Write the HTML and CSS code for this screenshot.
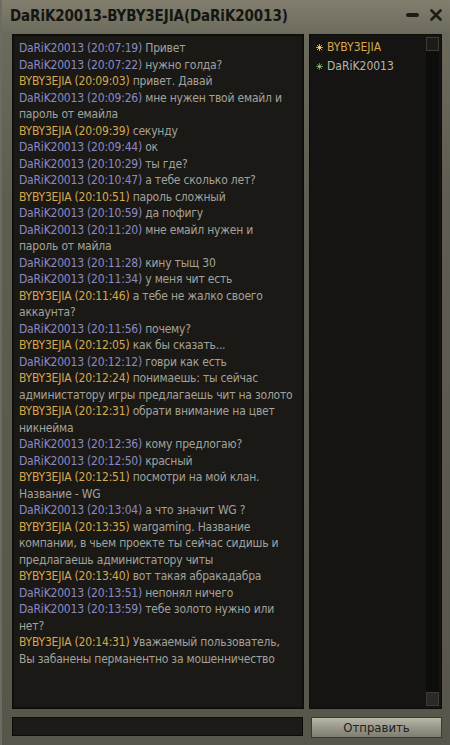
FILE: index.html
```html
<!DOCTYPE html>
<html lang="ru">
<head>
    <meta charset="UTF-8">
    <meta name="viewport" content="width=device-width, initial-scale=1.0">
    <title>DaRiK20013-BYBY3EJIA</title>
    <link rel="stylesheet" href="styles.css">
</head>
<body>
    <div class="window">
        <div class="titlebar">
            <div class="title">DaRiK20013-BYBY3EJIA(DaRiK20013)</div>
            <div class="controls">
                <span class="btn-min"></span>
                <svg class="btn-close" width="12" height="12" viewBox="0 0 12 12">
                    <path d="M1.5 1.5 L10.5 10.5 M10.5 1.5 L1.5 10.5" stroke="#1c1c18" stroke-width="2.6" stroke-linecap="round"/>
                </svg>
            </div>
        </div>

        <div class="main">
            <div class="chat">
                <div class="msg"><span class="me">DaRiK20013 (20:07:19)</span> Привет</div>
                <div class="msg"><span class="me">DaRiK20013 (20:07:22)</span> нужно голда?</div>
                <div class="msg"><span class="other">BYBY3EJIA (20:09:03)</span> привет. Давай</div>
                <div class="msg"><span class="me">DaRiK20013 (20:09:26)</span> мне нужен твой емайл и пароль от емайла</div>
                <div class="msg"><span class="other">BYBY3EJIA (20:09:39)</span> секунду</div>
                <div class="msg"><span class="me">DaRiK20013 (20:09:44)</span> ок</div>
                <div class="msg"><span class="me">DaRiK20013 (20:10:29)</span> ты где?</div>
                <div class="msg"><span class="me">DaRiK20013 (20:10:47)</span> а тебе сколько лет?</div>
                <div class="msg"><span class="other">BYBY3EJIA (20:10:51)</span> пароль сложный</div>
                <div class="msg"><span class="me">DaRiK20013 (20:10:59)</span> да пофигу</div>
                <div class="msg"><span class="me">DaRiK20013 (20:11:20)</span> мне емайл нужен и пароль от майла</div>
                <div class="msg"><span class="me">DaRiK20013 (20:11:28)</span> кину тыщ 30</div>
                <div class="msg"><span class="me">DaRiK20013 (20:11:34)</span> у меня чит есть</div>
                <div class="msg"><span class="other">BYBY3EJIA (20:11:46)</span> а тебе не жалко своего аккаунта?</div>
                <div class="msg"><span class="me">DaRiK20013 (20:11:56)</span> почему?</div>
                <div class="msg"><span class="other">BYBY3EJIA (20:12:05)</span> как бы сказать...</div>
                <div class="msg"><span class="me">DaRiK20013 (20:12:12)</span> говри как есть</div>
                <div class="msg"><span class="other">BYBY3EJIA (20:12:24)</span> понимаешь: ты сейчас администатору игры предлагаешь чит на золото</div>
                <div class="msg"><span class="other">BYBY3EJIA (20:12:31)</span> обрати внимание на цвет никнейма</div>
                <div class="msg"><span class="me">DaRiK20013 (20:12:36)</span> кому предлогаю?</div>
                <div class="msg"><span class="me">DaRiK20013 (20:12:50)</span> красный</div>
                <div class="msg"><span class="other">BYBY3EJIA (20:12:51)</span> посмотри на мой клан. Название - WG</div>
                <div class="msg"><span class="me">DaRiK20013 (20:13:04)</span> а что значит WG ?</div>
                <div class="msg"><span class="other">BYBY3EJIA (20:13:35)</span> wargaming. Название компании, в чьем проекте ты сейчас сидишь и предлагаешь администатору читы</div>
                <div class="msg"><span class="other">BYBY3EJIA (20:13:40)</span> вот такая абракадабра</div>
                <div class="msg"><span class="me">DaRiK20013 (20:13:51)</span> непонял ничего</div>
                <div class="msg"><span class="me">DaRiK20013 (20:13:59)</span> тебе золото нужно или нет?</div>
                <div class="msg"><span class="other">BYBY3EJIA (20:14:31)</span> Уважаемый пользователь, Вы забанены перманентно за мошенничество</div>
            </div>

            <div class="users">
                <div class="user-list">
                    <div class="user other">
                        <svg class="star" width="7" height="7" viewBox="0 0 7 7">
                            <path d="M3.5 0 V7 M0 3.5 H7 M1 1 L6 6 M6 1 L1 6" stroke="#d8a040" stroke-width="1"/>
                            <circle cx="3.5" cy="3.5" r="1.3" fill="#ffd27a"/>
                        </svg>BYBY3EJIA
                    </div>
                    <div class="user">
                        <svg class="star" width="7" height="7" viewBox="0 0 7 7">
                            <path d="M3.5 0 V7 M0 3.5 H7 M1 1 L6 6 M6 1 L1 6" stroke="#4e8a36" stroke-width="1"/>
                            <circle cx="3.5" cy="3.5" r="1.3" fill="#8fd068"/>
                        </svg>DaRiK20013
                    </div>
                </div>
                <div class="scrollbar">
                    <div class="arrow"></div>
                    <div class="track"></div>
                    <div class="arrow arrow-down"></div>
                </div>
            </div>
        </div>

        <div class="footer">
            <input type="text" class="input">
            <button class="send">Отправить</button>
        </div>
    </div>
</body>
</html>
```

FILE: styles.css
```css
body {
    margin: 0;
    background: #5a584c;
    font-family: "DejaVu Sans Condensed", "DejaVu Sans", sans-serif;
}

.window {
    width: 450px;
    height: 745px;
    box-sizing: border-box;
    padding: 0 8px 8px 12px;
    display: flex;
    flex-direction: column;
    background: linear-gradient(to bottom, #827f6f 0px, #6c6a5c 34px, #5f5d51 200px, #58564a 745px);
    box-shadow: inset 2px 0 0 #6e6c60;
}

.titlebar {
    height: 34px;
    display: flex;
    align-items: center;
    justify-content: space-between;
    margin-left: -2px;
}

.title {
    font-family: "DejaVu Sans Condensed", "DejaVu Sans", sans-serif;
    font-weight: bold;
    font-size: 15px;
    color: #151512;
    letter-spacing: -0.1px;
    margin-top: -3px;
}

.controls {
    display: flex;
    align-items: center;
    gap: 11px;
    margin-top: -4px;
}

.btn-min {
    width: 13px;
    height: 4px;
    border-radius: 2px;
    background: #1c1c18;
}

.main {
    flex: 1;
    display: flex;
    gap: 5px;
    min-height: 0;
}

.chat {
    width: 292px;
    box-sizing: border-box;
    background: #1a1916;
    border: 1px solid #0c0c0a;
    box-shadow: inset 0 0 2px #000;
    padding: 5px 8px 0 6px;
    font-size: 12px;
    line-height: 16.5px;
    letter-spacing: -0.2px;
    color: #a3a29a;
    overflow: hidden;
}

.me {
    color: #8c89c2;
}

.other {
    color: #d8a74e;
}

.users {
    flex: 1;
    display: flex;
    background: #151412;
    border: 1px solid #0c0c0a;
    padding: 2px 2px 2px 0;
}

.user-list {
    flex: 1;
    padding: 1px 0 0 6px;
    font-size: 12px;
    line-height: 19px;
    color: #b5b4ab;
}

.user {
    display: flex;
    align-items: center;
}

.user.other {
    color: #d8a74e;
}

.star {
    margin-right: 4px;
}

.scrollbar {
    width: 13px;
    display: flex;
    flex-direction: column;
    background: #0d0d0b;
}

.arrow {
    height: 12px;
    border: 1px solid #3c3b35;
    background: #1d1c19;
}

.arrow-down {
    background: #2a2925;
}

.track {
    flex: 1;
}

.footer {
    display: flex;
    gap: 8px;
    margin-top: 8px;
    height: 20px;
}

.input {
    width: 291px;
    box-sizing: border-box;
    height: 19px;
    background: #1c1b18;
    border: 1px solid #0c0c0a;
    margin: 0;
    padding: 0;
}

.send {
    flex: 1;
    height: 21px;
    margin: 0;
    padding: 0;
    border: 1px solid #3a3932;
    background: linear-gradient(to bottom, #b9b7a8 0%, #99978a 50%, #7f7d71 100%);
    font-family: "DejaVu Sans Condensed", "DejaVu Sans", sans-serif;
    font-size: 13px;
    color: #22221e;
}
```
